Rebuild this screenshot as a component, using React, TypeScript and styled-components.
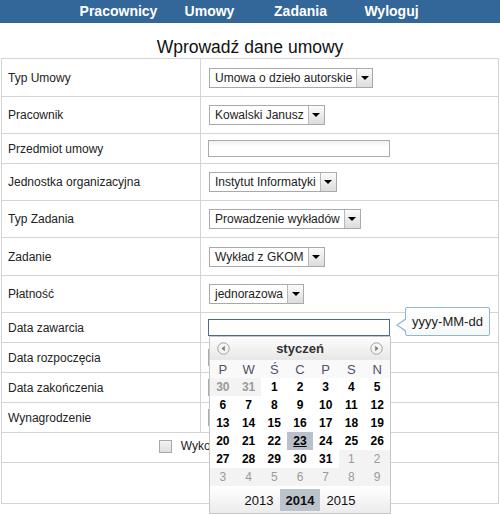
import React from 'react'
import styled, { createGlobalStyle } from 'styled-components'

const FONT = "'Liberation Sans', Arial, sans-serif"

const GlobalStyle = createGlobalStyle`
  html, body {
    margin: 0;
    padding: 0;
    background: #fff;
    font-family: ${FONT};
  }
  table, td, label, input {
    font-family: ${FONT};
  }
`

const Page = styled.div`
  width: 500px;
  height: 514px;
  overflow: hidden;
  position: relative;
  font-family: ${FONT};
`

const NavBar = styled.div`
  height: 23px;
  background: #336699;
  display: flex;
  justify-content: center;
  padding-left: 10px;
`

const NavItem = styled.a`
  width: 91px;
  text-align: center;
  color: #fff;
  font-family: ${FONT};
  font-weight: bold;
  font-size: 14px;
  line-height: 23px;
  text-decoration: none;
`

const Title = styled.h2`
  margin: 0;
  padding-top: 14px;
  font-family: ${FONT};
  font-size: 17.5px;
  font-weight: normal;
  line-height: 21px;
  text-align: center;
  color: #111;
`

const FormTable = styled.table`
  border-collapse: collapse;
  width: 498px;
  margin-left: 1px;
  font-family: ${FONT};
  font-size: 12px;
  color: #222;
`

const Row = styled.tr<{ $h: number }>`
  height: ${({ $h }) => $h}px;
`

const LabelCell = styled.td`
  width: 192px;
  border: 1px solid #d4d4d4;
  padding: 0 0 0 6px;
  vertical-align: middle;
  font-size: 12px;
`

const FieldCell = styled.td`
  border: 1px solid #d4d4d4;
  padding: 0 0 0 8px;
  vertical-align: middle;
  font-size: 12px;
`

const WideCell = styled.td`
  border: 1px solid #d4d4d4;
  text-align: center;
  vertical-align: middle;
  padding: 0;
  font-size: 12px;
`

const SelectBox = styled.div`
  display: inline-flex;
  height: 20px;
  box-sizing: border-box;
  border: 1px solid #a9a9a9;
  background: #fff;
  vertical-align: middle;
`

const SelectValue = styled.span`
  display: flex;
  align-items: center;
  padding: 0 4px 0 5px;
  color: #222;
  font-family: ${FONT};
  font-size: 12px;
  white-space: nowrap;
`

const SelectButton = styled.span`
  width: 15px;
  border-left: 1px solid #b8b8b8;
  background: linear-gradient(#fbfbfb, #dcdcdc);
  display: flex;
  align-items: center;
  justify-content: center;
`

const Caret = styled.span`
  width: 0;
  height: 0;
  border-left: 4px solid transparent;
  border-right: 4px solid transparent;
  border-top: 4px solid #000;
`

const TextInput = styled.div<{ $focused?: boolean }>`
  width: 182px;
  height: 17px;
  box-sizing: border-box;
  margin-left: -1px;
  border: 1px solid ${({ $focused }) => ($focused ? '#4b6b8d' : '#ababab')};
  background: ${({ $focused }) => ($focused ? '#fff' : 'linear-gradient(#f1f1f1, #fff 6px)')};
`

const DateField = styled.div`
  position: relative;
  display: inline-block;
  vertical-align: middle;
`

const Hint = styled.div`
  position: absolute;
  left: 196px;
  top: -12px;
  width: 85px;
  height: 29px;
  box-sizing: border-box;
  border: 1px solid #8eb5d8;
  border-radius: 2px;
  background: linear-gradient(#fff, #f6f8fa);
  font-family: ${FONT};
  font-size: 13px;
  line-height: 27px;
  text-align: center;
  color: #222;
  white-space: nowrap;

  &::before {
    content: '';
    position: absolute;
    left: -10px;
    top: 10px;
    border-top: 7px solid transparent;
    border-bottom: 7px solid transparent;
    border-right: 10px solid #8eb5d8;
  }
  &::after {
    content: '';
    position: absolute;
    left: -8px;
    top: 11px;
    border-top: 6px solid transparent;
    border-bottom: 6px solid transparent;
    border-right: 9px solid #fff;
  }
`

const Calendar = styled.div`
  position: absolute;
  left: 0;
  top: 17px;
  width: 182px;
  box-sizing: border-box;
  border: 1px solid #c6c6c6;
  background: #fff;
  z-index: 2;
  font-family: ${FONT};
`

const CalHeader = styled.div`
  height: 23px;
  display: flex;
  align-items: center;
  justify-content: space-between;
  padding: 0 7px;
  background: linear-gradient(#fdfdfd, #e7e7e7);
`

const MonthName = styled.span`
  font-weight: bold;
  font-size: 13px;
  color: #333;
`

const WeekGrid = styled.div<{ $h: number }>`
  display: grid;
  grid-template-columns: repeat(7, 1fr);
  height: ${({ $h }) => $h}px;
`

const WeekDay = styled.span`
  display: flex;
  align-items: center;
  justify-content: center;
  font-size: 13px;
  color: #50506a;
  background: #f9f9f9;
`

const Day = styled.span<{ $other?: boolean; $bold?: boolean; $today?: boolean }>`
  display: flex;
  align-items: center;
  justify-content: center;
  font-size: 12px;
  font-weight: ${({ $other, $bold }) => (!$other || $bold ? 'bold' : 'normal')};
  color: ${({ $other }) => ($other ? '#9a9a9a' : '#000')};
  background: ${({ $other, $today }) => ($today ? '#b9c0cb' : $other ? '#f3f3f3' : '#fff')};
  text-decoration: ${({ $today }) => ($today ? 'underline' : 'none')};
`

const YearRow = styled.div`
  height: 27px;
  display: flex;
  align-items: center;
  justify-content: center;
  background: linear-gradient(#fff, #ececec);
`

const Year = styled.span<{ $active?: boolean }>`
  padding: 0 6px;
  height: 22px;
  line-height: 23px;
  font-size: 13px;
  font-weight: ${({ $active }) => ($active ? 'bold' : 'normal')};
  background: ${({ $active }) => ($active ? '#bcc3cd' : 'transparent')};
  color: #111;
`

const CheckLabel = styled.label`
  display: inline-flex;
  align-items: center;
  gap: 9px;
  margin-right: 10px;
  color: #222;
  font-size: 12px;
`

const CheckBox = styled.span`
  width: 13px;
  height: 13px;
  box-sizing: border-box;
  border: 1px solid #a8a8a8;
  background: linear-gradient(#f4f4f4, #dedede);
`

const NavArrow = ({ dir }: { dir: 'prev' | 'next' }) => (
  <svg width="13" height="13" viewBox="0 0 13 13">
    <circle cx="6.5" cy="6.5" r="5.7" fill="#f4f4f4" stroke="#a0a0a0" strokeWidth="1" />
    {dir === 'prev' ? (
      <polygon points="7.8,3.8 7.8,9.2 4.6,6.5" fill="#7a7a7a" />
    ) : (
      <polygon points="5.2,3.8 5.2,9.2 8.4,6.5" fill="#7a7a7a" />
    )}
  </svg>
)

const Select = ({ value }: { value: string }) => (
  <SelectBox>
    <SelectValue>{value}</SelectValue>
    <SelectButton>
      <Caret />
    </SelectButton>
  </SelectBox>
)

type Cell = { d: number; other?: boolean; bold?: boolean; today?: boolean }

const weeks: Cell[][] = [
  [{ d: 30, other: true, bold: true }, { d: 31, other: true, bold: true }, { d: 1 }, { d: 2 }, { d: 3 }, { d: 4 }, { d: 5 }],
  [6, 7, 8, 9, 10, 11, 12].map((d) => ({ d })),
  [13, 14, 15, 16, 17, 18, 19].map((d) => ({ d })),
  [{ d: 20 }, { d: 21 }, { d: 22 }, { d: 23, today: true }, { d: 24 }, { d: 25 }, { d: 26 }],
  [{ d: 27 }, { d: 28 }, { d: 29 }, { d: 30 }, { d: 31 }, { d: 1, other: true }, { d: 2, other: true }],
  [3, 4, 5, 6, 7, 8, 9].map((d) => ({ d, other: true })),
]

const weekDays = ['P', 'W', 'Ś', 'C', 'P', 'S', 'N']

const DatePicker = () => (
  <DateField>
    <TextInput $focused />
    <Hint>yyyy-MM-dd</Hint>
    <Calendar>
      <CalHeader>
        <NavArrow dir="prev" />
        <MonthName>styczeń</MonthName>
        <NavArrow dir="next" />
      </CalHeader>
      <WeekGrid $h={18}>
        {weekDays.map((w, i) => (
          <WeekDay key={i}>{w}</WeekDay>
        ))}
      </WeekGrid>
      {weeks.map((week, i) => (
        <WeekGrid $h={18} key={i}>
          {week.map((c, j) => (
            <Day key={j} $other={c.other} $bold={c.bold} $today={c.today}>
              {c.d}
            </Day>
          ))}
        </WeekGrid>
      ))}
      <YearRow>
        <Year>2013</Year>
        <Year $active>2014</Year>
        <Year>2015</Year>
      </YearRow>
    </Calendar>
  </DateField>
)

const App: React.FC = () => {
  return (
    <Page>
      <GlobalStyle />
      <NavBar>
        <NavItem>Pracownicy</NavItem>
        <NavItem>Umowy</NavItem>
        <NavItem>Zadania</NavItem>
        <NavItem>Wyloguj</NavItem>
      </NavBar>
      <Title>Wprowadź dane umowy</Title>
      <FormTable>
        <tbody>
          <Row $h={38}>
            <LabelCell>Typ Umowy</LabelCell>
            <FieldCell>
              <Select value="Umowa o dzieło autorskie" />
            </FieldCell>
          </Row>
          <Row $h={37}>
            <LabelCell>Pracownik</LabelCell>
            <FieldCell>
              <Select value="Kowalski Janusz" />
            </FieldCell>
          </Row>
          <Row $h={30}>
            <LabelCell>Przedmiot umowy</LabelCell>
            <FieldCell>
              <TextInput />
            </FieldCell>
          </Row>
          <Row $h={37}>
            <LabelCell>Jednostka organizacyjna</LabelCell>
            <FieldCell>
              <Select value="Instytut Informatyki" />
            </FieldCell>
          </Row>
          <Row $h={37}>
            <LabelCell>Typ Zadania</LabelCell>
            <FieldCell>
              <Select value="Prowadzenie wykładów" />
            </FieldCell>
          </Row>
          <Row $h={38}>
            <LabelCell>Zadanie</LabelCell>
            <FieldCell>
              <Select value="Wykład z GKOM" />
            </FieldCell>
          </Row>
          <Row $h={37}>
            <LabelCell>Płatność</LabelCell>
            <FieldCell>
              <Select value="jednorazowa" />
            </FieldCell>
          </Row>
          <Row $h={30}>
            <LabelCell>Data zawarcia</LabelCell>
            <FieldCell>
              <DatePicker />
            </FieldCell>
          </Row>
          <Row $h={30}>
            <LabelCell>Data rozpoczęcia</LabelCell>
            <FieldCell>
              <TextInput />
            </FieldCell>
          </Row>
          <Row $h={30}>
            <LabelCell>Data zakończenia</LabelCell>
            <FieldCell>
              <TextInput />
            </FieldCell>
          </Row>
          <Row $h={30}>
            <LabelCell>Wynagrodzenie</LabelCell>
            <FieldCell>
              <TextInput />
            </FieldCell>
          </Row>
          <Row $h={30}>
            <WideCell colSpan={2}>
              <CheckLabel>
                <CheckBox />
                Wykonawca spoza jednostki
              </CheckLabel>
            </WideCell>
          </Row>
          <Row $h={41}>
            <WideCell colSpan={2} />
          </Row>
        </tbody>
      </FormTable>
    </Page>
  )
}

export default App
